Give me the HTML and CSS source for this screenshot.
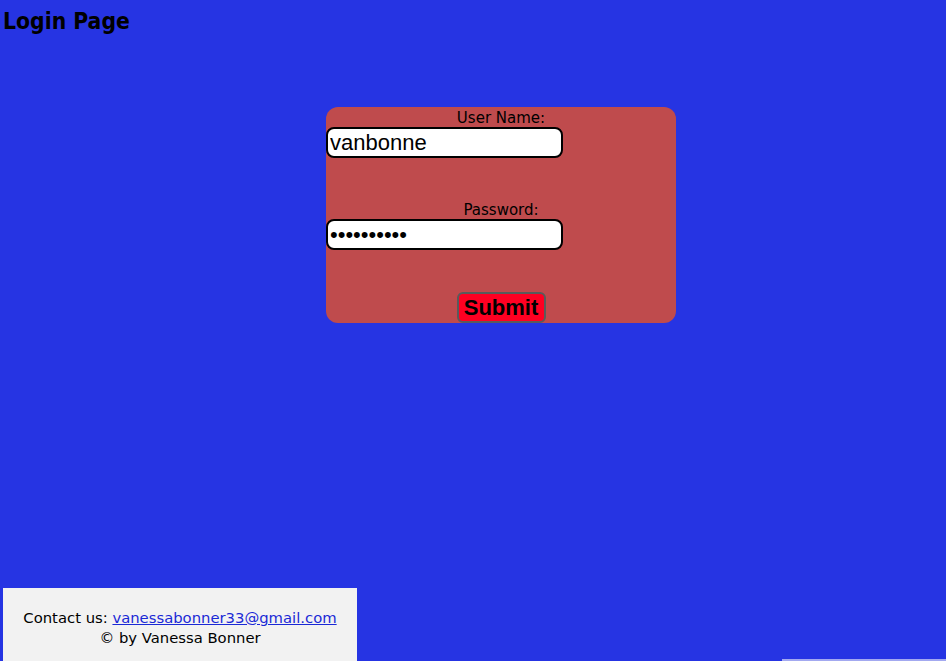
FILE: index.html
```html
<!DOCTYPE html>
<html>
<head>
<meta charset="utf-8">
<title>Login Page</title>
<link rel="stylesheet" href="styles.css">
</head>
<body>
<div class="page">
  <h1 class="title">Login Page</h1>
  <form class="card">
    <label class="label" for="user">User Name:</label>
    <input class="field" id="user" type="text" value="vanbonne">
    <label class="label label-pass" for="pass">Password:</label>
    <input class="field" id="pass" type="password" value="vanbonne12">
    <div class="actions"><button class="submit" type="button">Submit</button></div>
  </form>
  <div class="bottom">
    <footer class="footer">
      <p class="contact">Contact us: <a href="#" class="mail">vanessabonner33@gmail.com</a><br>© by Vanessa Bonner</p>
    </footer>
    <div class="edge"></div>
  </div>
</div>
</body>
</html>
```
FILE: styles.css
```css
html, body {
  margin: 0;
  padding: 0;
  height: 100%;
  overflow: hidden;
}
body {
  background: #2634e3;
  font-family: "DejaVu Sans", Verdana, sans-serif;
  color: #000;
}
.page {
  padding: 0 0 0 3px;
}
.title {
  margin: 0;
  padding-top: 7px;
  font-family: "DejaVu Sans Condensed", "DejaVu Sans", sans-serif;
  font-size: 22.7px;
  line-height: 28px;
  font-weight: bold;
}
.card {
  margin: 72px 0 0 323px;
  width: 350px;
  height: 216px;
  box-sizing: border-box;
  background: #bf4b4d;
  border-radius: 12px;
  display: flex;
  flex-direction: column;
  align-items: flex-start;
}
.label {
  align-self: center;
  font-size: 15px;
  line-height: 20px;
  padding-top: 1px;
  margin-bottom: -1px;
}
.label-pass {
  margin-top: 41px;
}
.field {
  width: 237px;
  height: 31px;
  box-sizing: border-box;
  margin: 0;
  border: 2px solid #000;
  border-radius: 8px;
  background: #fff;
  padding: 0 2px;
  font-family: "Liberation Sans", Arial, sans-serif;
  font-size: 22px;
  color: #000;
  outline: none;
}
.actions {
  align-self: center;
  margin-top: auto;
}
.submit {
  display: block;
  width: 89px;
  height: 31px;
  box-sizing: border-box;
  margin: 0;
  padding: 0;
  background: #ff0022;
  border: 2px solid #5a5a5a;
  border-radius: 6px;
  font-family: "Liberation Sans", Arial, sans-serif;
  font-weight: bold;
  font-size: 22px;
  color: #000;
}
.bottom {
  margin-top: 265px;
  display: flex;
  justify-content: space-between;
  align-items: flex-start;
}
.footer {
  width: 354px;
  height: 80px;
  background: #f2f2f2;
  display: flex;
  justify-content: center;
}
.contact {
  margin: 20px 0 0;
  text-align: center;
  font-size: 14.8px;
  line-height: 20px;
}
.mail {
  color: #1a29d6;
}
.edge {
  width: 164px;
  height: 2px;
  margin-top: 71px;
  background: #a3a9f0;
}
```
